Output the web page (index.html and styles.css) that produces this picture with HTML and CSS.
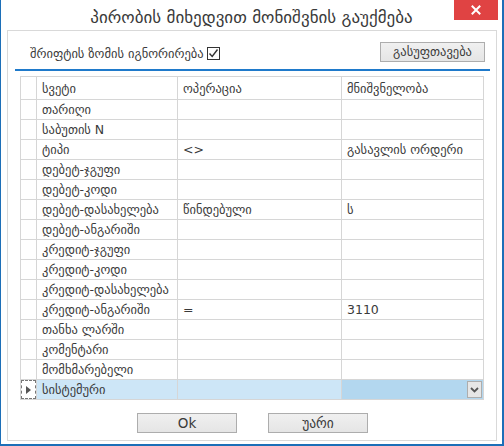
FILE: index.html
```html
<!DOCTYPE html>
<html lang="ka">
<head>
<meta charset="utf-8">
<title>პირობის მიხედვით მონიშვნის გაუქმება</title>
<link rel="stylesheet" href="styles.css">
</head>
<body>
<div class="window">
  <div class="titlebar">
    <span class="spacer"></span>
    <h1 class="title">პირობის მიხედვით მონიშვნის გაუქმება</h1>
    <span class="controls"><button class="close" type="button">
      <svg width="10" height="10" viewBox="0 0 10 10"><path d="M1.5 1.5L8.5 8.5M8.5 1.5L1.5 8.5" stroke="#fff" stroke-width="2" stroke-linecap="square"/></svg>
    </button></span>
  </div>
  <div class="panel">
    <div class="options">
      <label class="ignore">შრიფტის ზომის იგნორირება <span class="check"><svg width="11" height="11" viewBox="0 0 11 11"><path d="M1.5 5.5L4.2 8.5L9.5 1.5" fill="none" stroke="#333" stroke-width="1.4"/></svg></span></label>
      <button class="btn clear" type="button">გასუფთავება</button>
    </div>
    <div class="rule"></div>
    <div class="grid">
      <div class="rh"></div><div class="c">სვეტი</div><div class="c">ოპერაცია</div><div class="c">მნიშვნელობა</div>
      <div class="rh"></div><div class="c">თარიღი</div><div class="c"></div><div class="c"></div>
      <div class="rh"></div><div class="c">საბუთის N</div><div class="c"></div><div class="c"></div>
      <div class="rh"></div><div class="c">ტიპი</div><div class="c">&lt;&gt;</div><div class="c">გასავლის ორდერი</div>
      <div class="rh"></div><div class="c">დებეტ-ჯგუფი</div><div class="c"></div><div class="c"></div>
      <div class="rh"></div><div class="c">დებეტ-კოდი</div><div class="c"></div><div class="c"></div>
      <div class="rh"></div><div class="c">დებეტ-დასახელება</div><div class="c">წინდებული</div><div class="c">ს</div>
      <div class="rh"></div><div class="c">დებეტ-ანგარიში</div><div class="c"></div><div class="c"></div>
      <div class="rh"></div><div class="c">კრედიტ-ჯგუფი</div><div class="c"></div><div class="c"></div>
      <div class="rh"></div><div class="c">კრედიტ-კოდი</div><div class="c"></div><div class="c"></div>
      <div class="rh"></div><div class="c">კრედიტ-დასახელება</div><div class="c"></div><div class="c"></div>
      <div class="rh"></div><div class="c">კრედიტ-ანგარიში</div><div class="c">=</div><div class="c">3110</div>
      <div class="rh"></div><div class="c">თანხა ლარში</div><div class="c"></div><div class="c"></div>
      <div class="rh"></div><div class="c">კომენტარი</div><div class="c"></div><div class="c"></div>
      <div class="rh"></div><div class="c">მომხმარებელი</div><div class="c"></div><div class="c"></div>
      <div class="rh current"><span class="focus"><svg width="5" height="8" viewBox="0 0 5 8"><path d="M0 0L5 4L0 8Z" fill="#555"/></svg></span></div><div class="c sel">სისტემური</div><div class="c sel"></div><div class="c sel edit"><span class="drop"><svg width="9" height="6" viewBox="0 0 9 6"><path d="M1 1L4.5 4.5L8 1" fill="none" stroke="#555" stroke-width="1.8"/></svg></span></div>
    </div>
    <div class="actions">
      <button class="btn act" type="button">Ok</button>
      <button class="btn act" type="button">უარი</button>
    </div>
  </div>
</div>
</body>
</html>
```

FILE: styles.css
```css
* { box-sizing: border-box; }
html, body { margin: 0; padding: 0; background: #fff; }
body {
  font-family: "DejaVu Sans", "Noto Sans", sans-serif;
  color: #3a3a3a;
}
.window {
  width: 504px;
  height: 446px;
  background: #fff;
  border-left: 1px solid #1c6fb8;
  border-right: 2px solid #1c6fb8;
  border-bottom: 2px solid #1c6fb8;
  display: flex;
  flex-direction: column;
}
.titlebar {
  height: 30px;
  display: grid;
  grid-template-columns: 1fr auto 1fr;
  align-items: start;
}
.title {
  margin: 6px 0 0;
  font-size: 17px;
  font-weight: normal;
  color: #3a3a3a;
  line-height: 22px;
  white-space: nowrap;
}
.controls { display: flex; justify-content: flex-end; padding-right: 4px; }
.close {
  width: 44px;
  height: 20px;
  border: 0;
  padding: 0;
  background: #e04343;
  display: flex;
  align-items: center;
  justify-content: center;
}
.panel {
  flex: 1;
  margin: 0 5px 3px 6px;
  border: 1px solid #d9d9d9;
  padding: 0 6px 0 7px;
  display: flex;
  flex-direction: column;
}
.options {
  display: flex;
  justify-content: space-between;
  padding: 11px 5px 0 15px;
  height: 38px;
  align-items: flex-start;
}
.ignore {
  font-size: 12.5px;
  display: flex;
  align-items: center;
  gap: 3px;
  margin-top: 4px;
  white-space: nowrap;
}
.check {
  width: 13px;
  height: 13px;
  border: 1px solid #333;
  display: flex;
  align-items: center;
  justify-content: center;
  background: #fff;
}
.btn {
  font-family: "DejaVu Sans", "Noto Sans", sans-serif;
  font-size: 12.5px;
  color: #3a3a3a;
  height: 20px;
  padding: 0;
  border: 1px solid #adadad;
  background: linear-gradient(#f0f0f0, #e5e5e5);
  line-height: 18px;
}
.clear { width: 105px; }
.rule {
  height: 2px;
  background: #1f7acb;
}
.grid {
  margin: 5px 6px 0 5px;
  display: grid;
  grid-template-columns: 16px 141px 164px 142px;
  grid-template-rows: 23px repeat(15, 20px);
  border-top: 1px solid #d6d6d6;
  border-left: 1px solid #d6d6d6;
  font-size: 12.5px;
  color: #3a3a3a;
}
.rh, .c {
  border-right: 1px solid #d6d6d6;
  border-bottom: 1px solid #d6d6d6;
}
.c {
  padding-left: 5px;
  display: flex;
  align-items: center;
  white-space: nowrap;
  overflow: hidden;
}
.sel { background: #cde6f7; }
.sel.edit { background: #b3d7ef; justify-content: flex-end; padding-right: 1px; }
.rh.current { position: relative; }
.focus {
  position: absolute;
  inset: 0;
  border: 1px dashed #777;
  display: flex;
  align-items: center;
  justify-content: center;
}
.drop {
  width: 15px;
  height: 17px;
  border: 1px solid #adadad;
  background: #e6e6e6;
  display: flex;
  align-items: center;
  justify-content: center;
}
.actions {
  display: flex;
  justify-content: center;
  gap: 31px;
  margin-top: 13px;
}
.act { width: 100px; font-size: 13.5px; }
```
